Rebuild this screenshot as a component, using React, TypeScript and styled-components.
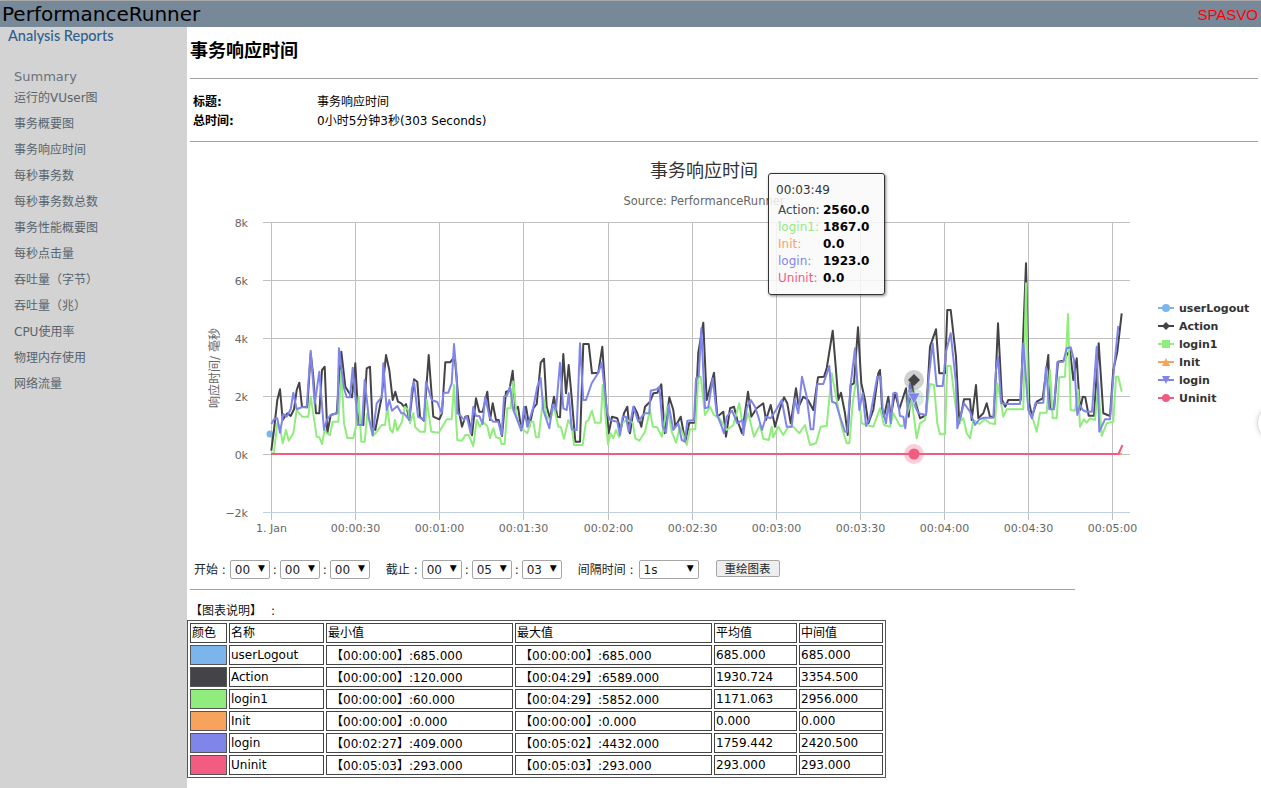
import React from "react";
import styled, { createGlobalStyle } from "styled-components";

type Pt = [number, number];

// traced from crops, so offsets take them back to page coordinates
const trace = (pts: Pt[], ox: number, oy: number): Pt[] =>
  pts.map(([x, y]) => [ox + x / 3, oy + y / 3] as Pt);

const join = (a: Pt[], b: Pt[], c: Pt[]) =>
  [...trace(a, 200, 200), ...trace(b, 530, 200), ...trace(c, 860, 170)]
    .map(([x, y]) => `${x.toFixed(1)},${y.toFixed(1)}`)
    .join(" ");

const actionLine = join(
  [[214,752],[222,690],[232,600],[240,568],[248,660],[262,640],[272,648],[282,628],[290,570],[298,548],[306,620],[322,622],[332,460],[340,530],[348,640],[358,640],[366,510],[374,500],[382,700],[392,645],[410,640],[424,455],[436,560],[456,592],[466,490],[476,675],[490,675],[500,505],[510,500],[518,680],[526,690],[545,590],[558,465],[568,510],[578,600],[586,575],[594,605],[604,610],[612,620],[618,612],[628,660],[642,538],[652,545],[660,650],[672,662],[686,465],[700,650],[718,658],[726,640],[736,487],[750,487],[764,470],[772,560],[778,640],[786,680],[796,650],[804,648],[816,706],[828,595],[838,635],[848,635],[862,575],[870,660],[878,610],[888,660],[896,660],[906,708],[918,575],[928,572],[938,512],[946,630],[954,620],[964,690],[978,620],[988,680],[1000,625],[1010,612],[1022,488],[1032,476],[1040,620]],
  [[60,655],[72,590],[82,650],[90,652],[100,462],[108,580],[116,495],[124,580],[136,725],[150,725],[160,432],[176,432],[186,520],[205,518],[217,440],[228,610],[236,700],[246,650],[262,655],[272,690],[282,640],[292,620],[300,700],[312,620],[322,640],[334,680],[345,620],[360,605],[370,580],[382,578],[394,553],[404,700],[418,592],[430,630],[436,680],[452,650],[466,725],[478,668],[495,668],[505,458],[520,368],[530,600],[552,518],[562,650],[580,635],[588,710],[600,625],[612,620],[622,660],[636,700],[654,575],[664,650],[680,625],[700,610],[708,660],[722,615],[735,680],[750,625],[762,592],[772,610],[782,670],[798,565],[806,620],[820,590],[834,600],[850,630],[864,532],[882,530],[890,505],[908,392],[918,510],[925,600],[933,578],[945,640],[953,705],[962,555],[972,550],[984,382],[994,550],[1005,600],[1015,670],[1030,630],[1045,520]],
  [[60,600],[66,715],[72,740],[85,680],[92,740],[105,668],[118,718],[138,655],[146,740],[155,640],[165,690],[180,745],[198,735],[210,530],[228,478],[238,610],[255,610],[262,420],[272,420],[288,560],[298,760],[312,688],[330,688],[335,750],[348,645],[355,745],[370,730],[380,700],[390,740],[402,740],[414,460],[426,690],[436,710],[445,690],[482,690],[498,280],[508,700],[516,740],[530,695],[548,685],[565,555],[570,715],[582,715],[594,575],[610,572],[630,540],[640,630],[650,565],[660,720],[668,680],[676,682],[686,737],[702,737],[716,520],[730,730],[750,738],[760,600],[772,545],[785,430]]
);

const loginLine = join(
  [[214,672],[222,658],[232,655],[240,698],[250,642],[260,650],[272,628],[280,578],[290,628],[305,622],[320,622],[332,452],[344,612],[358,515],[372,690],[380,660],[392,645],[412,640],[417,445],[432,565],[440,592],[450,592],[458,503],[474,675],[486,675],[494,540],[506,650],[518,705],[530,610],[546,590],[550,490],[560,630],[568,600],[576,632],[592,618],[604,640],[612,640],[628,660],[636,565],[642,545],[654,650],[672,660],[678,545],[695,600],[712,606],[725,640],[730,578],[745,578],[755,550],[762,432],[770,530],[772,640],[780,645],[792,660],[800,648],[812,700],[820,620],[828,648],[838,648],[848,672],[855,592],[870,655],[880,665],[895,665],[905,705],[912,590],[922,585],[930,560],[940,630],[950,655],[964,692],[972,620],[982,680],[1000,622],[1012,560],[1022,535],[1030,630]],
  [[58,685],[68,615],[78,630],[90,488],[100,625],[110,630],[116,580],[125,688],[140,690],[150,430],[160,600],[168,600],[185,550],[205,518],[215,488],[232,640],[240,660],[262,665],[270,705],[278,650],[288,650],[296,695],[310,620],[325,665],[335,650],[345,640],[358,640],[362,572],[380,568],[388,560],[398,680],[408,698],[416,615],[430,690],[445,670],[455,720],[465,725],[472,662],[492,660],[498,535],[506,530],[514,385],[525,625],[535,622],[548,535],[560,640],[575,680],[582,700],[590,650],[606,632],[622,670],[638,660],[640,705],[650,625],[662,600],[675,620],[685,650],[696,690],[708,650],[722,655],[738,630],[755,600],[770,680],[785,680],[794,598],[805,640],[816,530],[830,590],[842,688],[850,688],[862,552],[880,552],[898,498],[906,605],[918,610],[930,650],[945,695],[952,695],[962,552],[975,445],[988,630],[998,580],[1008,678],[1020,650],[1042,530]],
  [[62,620],[68,720],[78,760],[85,700],[92,760],[100,670],[110,670],[120,738],[130,740],[136,775],[150,640],[158,690],[175,730],[198,735],[206,622],[218,520],[230,648],[248,648],[258,545],[272,490],[288,640],[292,775],[312,700],[330,725],[345,765],[358,748],[372,743],[400,743],[408,600],[414,560],[424,700],[440,702],[480,702],[490,520],[505,720],[516,745],[526,700],[550,698],[558,590],[568,718],[582,718],[592,577],[610,575],[620,535],[632,532],[642,570],[652,735],[660,705],[668,720],[678,725],[696,725],[710,530],[718,785],[735,748],[750,748],[762,595],[775,468]]
);

const login1Line = join(
  [[214,762],[222,757],[232,670],[240,680],[248,730],[258,690],[266,722],[280,700],[290,630],[306,650],[325,650],[332,590],[350,710],[358,712],[366,732],[374,690],[380,700],[390,705],[398,665],[415,665],[424,510],[432,670],[442,714],[460,714],[470,670],[476,590],[484,725],[494,725],[502,640],[512,680],[518,708],[530,695],[545,675],[555,675],[562,620],[570,688],[578,698],[585,660],[592,692],[606,665],[614,620],[625,630],[630,670],[640,640],[646,682],[660,695],[675,695],[680,600],[694,695],[716,698],[730,675],[740,658],[755,658],[762,555],[772,720],[786,722],[796,705],[806,705],[820,738],[830,660],[840,680],[848,665],[862,678],[870,715],[880,685],[888,712],[900,715],[905,732],[914,732],[922,625],[932,625],[940,545],[950,650],[960,680],[970,690],[982,700],[992,665],[1000,665],[1008,712],[1016,712],[1030,590]],
  [[50,650],[60,660],[72,620],[85,680],[92,680],[102,716],[115,660],[125,680],[132,735],[158,735],[168,665],[175,662],[186,632],[195,668],[212,668],[218,555],[234,733],[242,700],[250,715],[258,690],[268,712],[275,670],[290,660],[308,668],[316,715],[328,722],[345,695],[360,630],[368,680],[382,682],[395,710],[412,620],[425,695],[438,728],[450,680],[458,700],[470,735],[480,688],[496,688],[505,530],[512,530],[525,645],[540,620],[552,645],[568,655],[590,690],[610,675],[628,610],[640,690],[655,640],[672,710],[690,675],[700,716],[716,720],[725,680],[730,712],[745,680],[760,705],[775,680],[790,680],[808,700],[825,675],[840,735],[858,730],[872,680],[890,678],[905,520],[920,600],[935,680],[950,730],[958,730],[968,610],[980,530],[995,670],[1010,675],[1030,680]],
  [[60,715],[72,765],[90,770],[100,730],[120,768],[130,768],[140,735],[155,690],[170,805],[180,760],[195,750],[210,642],[222,645],[232,760],[240,793],[255,793],[262,588],[272,588],[285,695],[295,760],[310,745],[320,790],[330,805],[340,750],[358,762],[375,748],[390,760],[405,762],[412,640],[420,680],[430,740],[440,718],[490,718],[498,340],[505,720],[520,750],[530,785],[540,728],[560,728],[570,600],[578,745],[590,745],[598,622],[615,620],[624,432],[632,720],[645,722],[655,660],[660,770],[672,748],[680,758],[690,745],[705,750],[715,640],[725,798],[740,760],[760,755],[768,620],[775,620],[785,665]]
);

const COLORS = {
  userLogout: "#7cb5ec",
  Action: "#434348",
  login1: "#90ed7d",
  Init: "#f7a35c",
  login: "#8085e9",
  Uninit: "#f15c80",
};

const navItems = [
  "运行的VUser图", "事务概要图", "事务响应时间", "每秒事务数", "每秒事务数总数", "事务性能概要图",
  "每秒点击量", "吞吐量（字节）", "吞吐量（兆）", "CPU使用率", "物理内存使用", "网络流量",
];

const yTicks = [
  { label: "8k", y: 222.5 }, { label: "6k", y: 280.5 }, { label: "4k", y: 338.5 },
  { label: "2k", y: 396.5 }, { label: "0k", y: 454.5 }, { label: "−2k", y: 512.5 },
];

const xTicks = ["1. Jan", "00:00:30", "00:01:00", "00:01:30", "00:02:00", "00:02:30", "00:03:00", "00:03:30", "00:04:00", "00:04:30", "00:05:00"];
const xAt = (i: number) => Math.round(271 + i * 84.13) + 0.5;

const legend: { name: keyof typeof COLORS; y: number }[] = [
  { name: "userLogout", y: 308 }, { name: "Action", y: 326 }, { name: "login1", y: 344 },
  { name: "Init", y: 362 }, { name: "login", y: 380 }, { name: "Uninit", y: 398 },
];

const tooltipRows: { name: keyof typeof COLORS; value: string }[] = [
  { name: "Action", value: "2560.0" }, { name: "login1", value: "1867.0" }, { name: "Init", value: "0.0" },
  { name: "login", value: "1923.0" }, { name: "Uninit", value: "0.0" },
];

const tableRows: { name: keyof typeof COLORS; min: string; max: string; avg: string; mid: string }[] = [
  { name: "userLogout", min: "【00:00:00】:685.000", max: "【00:00:00】:685.000", avg: "685.000", mid: "685.000" },
  { name: "Action", min: "【00:00:00】:120.000", max: "【00:04:29】:6589.000", avg: "1930.724", mid: "3354.500" },
  { name: "login1", min: "【00:00:00】:60.000", max: "【00:04:29】:5852.000", avg: "1171.063", mid: "2956.000" },
  { name: "Init", min: "【00:00:00】:0.000", max: "【00:00:00】:0.000", avg: "0.000", mid: "0.000" },
  { name: "login", min: "【00:02:27】:409.000", max: "【00:05:02】:4432.000", avg: "1759.442", mid: "2420.500" },
  { name: "Uninit", min: "【00:05:03】:293.000", max: "【00:05:03】:293.000", avg: "293.000", mid: "293.000" },
];

const legendMarker = (name: keyof typeof COLORS, y: number) => {
  const c = COLORS[name];
  const x = 1166;
  if (name === "Action") return <polygon points={`${x},${y - 4} ${x + 4},${y} ${x},${y + 4} ${x - 4},${y}`} fill={c} />;
  if (name === "login1") return <rect x={x - 4} y={y - 4} width={8} height={8} fill={c} />;
  if (name === "Init") return <polygon points={`${x},${y - 4} ${x + 4},${y + 4} ${x - 4},${y + 4}`} fill={c} />;
  if (name === "login") return <polygon points={`${x - 4},${y - 4} ${x + 4},${y - 4} ${x},${y + 4}`} fill={c} />;
  return <circle cx={x} cy={y} r={4} fill={c} />;
};

const Chart = () => (
  <ChartSvg viewBox="190 150 1071 400" width={1071} height={400}>
    <ChartTitle x={704} y={177} textAnchor="middle">事务响应时间</ChartTitle>
    <ChartSub x={704} y={205} textAnchor="middle">Source: PerformanceRunner</ChartSub>
    <AxisName transform="translate(219 368) rotate(-90)" textAnchor="middle">响应时间/ 毫秒</AxisName>

    {xTicks.map((t, i) => (
      <line key={t} x1={xAt(i)} x2={xAt(i)} y1={222} y2={520} stroke="#c0c0c0" />
    ))}
    {yTicks.slice(0, 5).map((t) => (
      <line key={t.label} x1={263} x2={1130} y1={t.y} y2={t.y} stroke="#c0c0c0" />
    ))}
    <line x1={263} x2={1130} y1={512.5} y2={512.5} stroke="#c0d0e0" />

    {yTicks.map((t) => (
      <AxisText key={t.label} x={248} y={t.y + 4} textAnchor="end">{t.label}</AxisText>
    ))}
    {xTicks.map((t, i) => (
      <AxisText key={t} x={xAt(i)} y={532} textAnchor="middle">{t}</AxisText>
    ))}

    <circle cx={270} cy={434} r={3.5} fill={COLORS.userLogout} />
    <Series points={actionLine} stroke={COLORS.Action} />
    <Series points={login1Line} stroke={COLORS.login1} />
    <Series points="271,454 1118,454 1122,454" stroke={COLORS.Init} />
    <Series points={loginLine} stroke={COLORS.login} />
    <Series points="271,454 1118.5,454 1122.5,445" stroke={COLORS.Uninit} />

    <circle cx={914} cy={380} r={10} fill={COLORS.Action} opacity={0.25} />
    <polygon points="914,374 920,380 914,386 908,380" fill={COLORS.Action} />
    <circle cx={914} cy={398} r={10} fill={COLORS.login1} opacity={0.2} />
    <circle cx={914} cy={398} r={10} fill={COLORS.login} opacity={0.15} />
    <polygon points="908,393 920,393 914,404" fill={COLORS.login} stroke="#fff" strokeWidth={0.5} />
    <circle cx={914} cy={454} r={10} fill={COLORS.Uninit} opacity={0.3} />
    <circle cx={914} cy={454} r={5.5} fill={COLORS.Uninit} />

    {legend.map(({ name, y }) => (
      <g key={name}>
        <line x1={1158} x2={1174} y1={y} y2={y} stroke={COLORS[name]} strokeWidth={2} />
        {legendMarker(name, y)}
        <LegendText x={1179} y={y + 4}>{name}</LegendText>
      </g>
    ))}
  </ChartSvg>
);

const TimeSelect = ({ value, width = 40 }: { value: string; width?: number }) => (
  <SelectWrap $width={width}>
    <NativeSelect defaultValue={value}>
      <option>{value}</option>
    </NativeSelect>
  </SelectWrap>
);

export default function App() {
  return (
    <>
      <GlobalStyle />
      <Header>
        <Brand>PerformanceRunner</Brand>
        <Vendor>SPASVO</Vendor>
      </Header>
      <Body>
        <Sidebar>
          <Logo>Analysis Reports</Logo>
          <Summary>Summary</Summary>
          {navItems.map((n) => (
            <NavItem key={n}>{n}</NavItem>
          ))}
        </Sidebar>
        <Main>
          <Title>事务响应时间</Title>
          <Rule />
          <Meta>
            <MetaLabel>标题:</MetaLabel>
            <MetaValue>事务响应时间</MetaValue>
            <MetaLabel>总时间:</MetaLabel>
            <MetaValue>0小时5分钟3秒(303 Seconds)</MetaValue>
          </Meta>
          <Rule $top={10} />
          <ChartWrap>
            <Chart />
            <Tooltip>
              <TooltipTime>00:03:49</TooltipTime>
              <TooltipGrid>
                {tooltipRows.map(({ name, value }) => (
                  <React.Fragment key={name}>
                    <TooltipName $color={COLORS[name]}>{name}:</TooltipName>
                    <TooltipValue>{value}</TooltipValue>
                  </React.Fragment>
                ))}
              </TooltipGrid>
            </Tooltip>
          </ChartWrap>
          <Controls>
            <FieldLabel>开始 :</FieldLabel>
            <TimeSelect value="00" />
            <Colon>:</Colon>
            <TimeSelect value="00" />
            <Colon>:</Colon>
            <TimeSelect value="00" />
            <FieldLabel $left={16}>截止 :</FieldLabel>
            <TimeSelect value="00" />
            <Colon>:</Colon>
            <TimeSelect value="05" />
            <Colon>:</Colon>
            <TimeSelect value="03" />
            <FieldLabel $left={16} $right={5}>间隔时间 :</FieldLabel>
            <TimeSelect value="1s" width={60} />
            <RedrawButton>重绘图表</RedrawButton>
          </Controls>
          <ShortRule />
          <Caption>【图表说明】<CaptionColon>:</CaptionColon></Caption>
          <DataTable>
            <colgroup>
              <col width={37} />
              <col width={95} />
              <col width={187} />
              <col width={197} />
              <col width={83} />
              <col width={84} />
            </colgroup>
            <tbody>
              <tr>
                <Cell>颜色</Cell>
                <Cell>名称</Cell>
                <Cell>最小值</Cell>
                <Cell>最大值</Cell>
                <Cell>平均值</Cell>
                <Cell>中间值</Cell>
              </tr>
              {tableRows.map((r) => (
                <tr key={r.name}>
                  <Swatch $color={COLORS[r.name]} />
                  <Cell>{r.name}</Cell>
                  <RangeCell>{r.min}</RangeCell>
                  <RangeCell>{r.max}</RangeCell>
                  <Cell>{r.avg}</Cell>
                  <Cell>{r.mid}</Cell>
                </tr>
              ))}
            </tbody>
          </DataTable>
        </Main>
      </Body>
      <EdgeHandle />
    </>
  );
}

const FONT = `"DejaVu Sans", "Noto Sans CJK SC", sans-serif`;

const GlobalStyle = createGlobalStyle`
  html, body {
    margin: 0;
    height: 100%;
    overflow: hidden;
    background: #fff;
    font-family: ${FONT};
    font-size: 12px;
    color: #000;
  }
`;

const Header = styled.div`
  display: flex;
  align-items: center;
  justify-content: space-between;
  box-sizing: border-box;
  height: 27px;
  border-top: 1px solid #a9a9a9;
  background: #778899;
  padding: 0 3px 0 2px;
`;

const Brand = styled.div`
  font-size: 20px;
  line-height: 26px;
  color: #000;
`;

const Vendor = styled.div`
  font-family: "Liberation Sans", sans-serif;
  font-size: 15px;
  color: #f00;
`;

const Body = styled.div`
  display: flex;
  height: 761px;
`;

const Sidebar = styled.div`
  box-sizing: border-box;
  width: 187px;
  flex: none;
  background: #d3d3d3;
  padding-left: 14px;
`;

const Logo = styled.div`
  margin-left: -6px;
  height: 18px;
  font-family: Lato, sans-serif;
  font-size: 14.5px;
  line-height: 18px;
  font-weight: 500;
  color: #2f5f8f;
`;

const Summary = styled.div`
  margin-top: 24px;
  height: 16px;
  line-height: 16px;
  font-size: 13px;
  color: #6b7178;
`;

const NavItem = styled.div`
  height: 26px;
  line-height: 26px;
  font-size: 12px;
  color: #59636c;
`;

const Main = styled.div`
  flex: 1;
  min-width: 0;
  padding-left: 3px;
`;

const Title = styled.h1`
  margin: 12px 0 0;
  height: 24px;
  line-height: 24px;
  font-size: 18px;
  font-weight: bold;
`;

const Rule = styled.div<{ $top?: number }>`
  height: 1px;
  margin: ${({ $top }) => $top ?? 15}px 3px 0 0;
  background: #a0a0a0;
`;

const ShortRule = styled.div`
  width: 885px;
  height: 1px;
  margin-top: 10px;
  background: #a0a0a0;
`;

const Meta = styled.div`
  display: grid;
  grid-template-columns: 124px 1fr;
  grid-auto-rows: 19px;
  margin-top: 14px;
  padding-left: 3px;
  line-height: 19px;
`;

const MetaLabel = styled.div`
  font-weight: bold;
`;

const MetaValue = styled.div``;

const ChartWrap = styled.div`
  position: relative;
  height: 400px;
  margin-top: 8px;
`;

const ChartSvg = styled.svg`
  display: block;
`;

const ChartTitle = styled.text`
  font-size: 18px;
  fill: #333;
`;

const ChartSub = styled.text`
  font-size: 11.5px;
  fill: #666;
`;

const AxisName = styled.text`
  font-size: 12px;
  fill: #666;
`;

const AxisText = styled.text`
  font-size: 11px;
  fill: #666;
`;

const LegendText = styled.text`
  font-size: 11px;
  font-weight: bold;
  fill: #333;
`;

const Series = styled.polyline`
  fill: none;
  stroke-width: 2;
  stroke-linejoin: round;
`;

const Tooltip = styled.div`
  position: absolute;
  left: 578px;
  top: 23px;
  box-sizing: border-box;
  width: 117px;
  height: 122px;
  padding: 9px 7px;
  background: rgba(249, 249, 249, 0.85);
  border: 1px solid #333;
  border-radius: 3px;
  box-shadow: 1px 1px 3px rgba(0, 0, 0, 0.5);
`;

const TooltipTime = styled.div`
  line-height: 15px;
  color: #333;
  margin-bottom: 4px;
`;

const TooltipGrid = styled.div`
  display: grid;
  grid-template-columns: 45px 1fr;
  grid-auto-rows: 17px;
  padding-left: 2px;
  line-height: 17px;
`;

const TooltipName = styled.span<{ $color: string }>`
  color: ${({ $color }) => $color};
`;

const TooltipValue = styled.b`
  color: #000;
`;

const Controls = styled.div`
  display: flex;
  align-items: flex-start;
  height: 19px;
  margin-top: 10px;
  padding-left: 4px;
  line-height: 20px;
  color: #222;
`;

const FieldLabel = styled.span<{ $left?: number; $right?: number }>`
  margin-left: ${({ $left }) => $left ?? 0}px;
  margin-right: ${({ $right }) => $right ?? 4}px;
  white-space: nowrap;
`;

const Colon = styled.span`
  width: 10px;
  text-align: center;
`;

const SelectWrap = styled.span<{ $width: number }>`
  position: relative;
  display: block;
  width: ${({ $width }) => $width}px;
  height: 19px;

  &::after {
    content: "▼";
    position: absolute;
    right: 5px;
    top: 1px;
    font-size: 9px;
    line-height: 15px;
    color: #000;
    pointer-events: none;
  }
`;

const NativeSelect = styled.select`
  appearance: none;
  display: block;
  box-sizing: border-box;
  width: 100%;
  height: 19px;
  padding: 0 0 0 4px;
  border: 1px solid #a6a6a6;
  border-radius: 2px;
  background: #fff;
  font-family: ${FONT};
  font-size: 12px;
  color: #222;
`;

const RedrawButton = styled.button`
  box-sizing: border-box;
  width: 64px;
  height: 17px;
  margin-left: 17px;
  padding: 0;
  border: 1px solid #a6a6a6;
  border-radius: 2px;
  background: #eee;
  font-family: ${FONT};
  font-size: 11.5px;
  line-height: 14px;
  color: #222;
`;

const Caption = styled.div`
  height: 19px;
  margin-top: 11px;
  line-height: 20px;
  color: #111;
`;

const CaptionColon = styled.span`
  margin-left: 9px;
`;

const DataTable = styled.table`
  box-sizing: border-box;
  width: 699px;
  margin-left: -3px;
  table-layout: fixed;
  border-collapse: separate;
  border-spacing: 2px;
  border: 1px solid #555;
`;

const Cell = styled.td`
  box-sizing: border-box;
  height: 20px;
  padding: 0 1px;
  border: 1px solid #444;
  font-size: 12px;
  line-height: 16px;
  white-space: nowrap;
  overflow: hidden;
`;

const RangeCell = styled(Cell)`
  padding: 1px 0 0 4px;
`;

const Swatch = styled.td<{ $color: string }>`
  box-sizing: border-box;
  height: 20px;
  padding: 0;
  border: 1px solid #555;
  background: ${({ $color }) => $color};
`;

const EdgeHandle = styled.div`
  position: fixed;
  left: 1257px;
  top: 405px;
  width: 34px;
  height: 34px;
  border: 1px solid #dcdcdc;
  border-radius: 50%;
  background: #fff;
  box-shadow: 0 0 5px rgba(0, 0, 0, 0.15);
`;
